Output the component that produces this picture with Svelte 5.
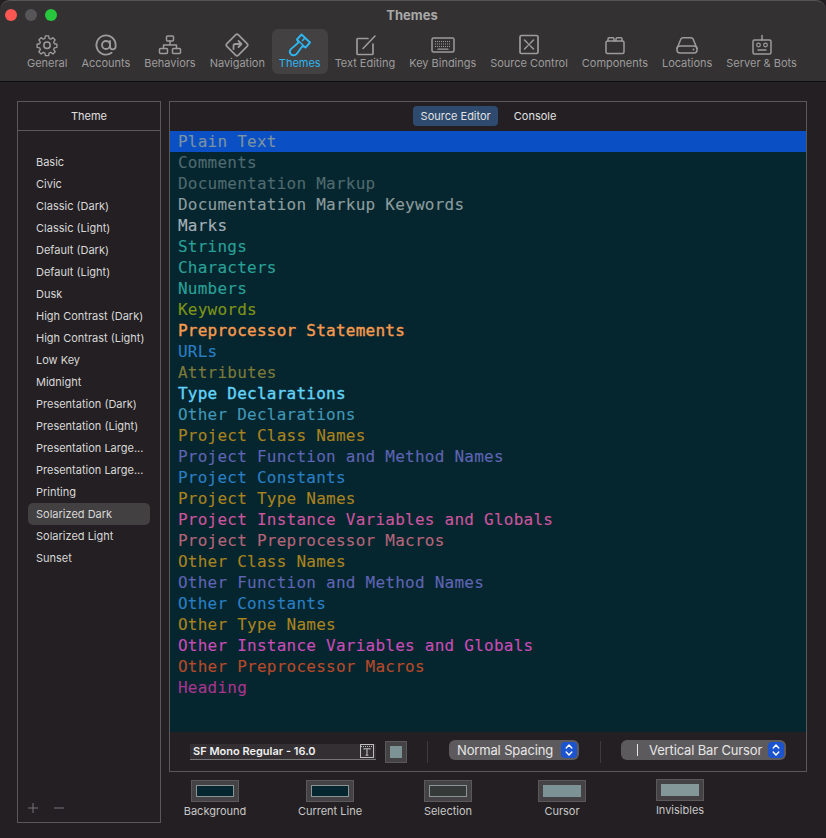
<script>
  const tabs = [
    { label: "General", icon: "gear" },
    { label: "Accounts", icon: "at" },
    { label: "Behaviors", icon: "tree" },
    { label: "Navigation", icon: "nav" },
    { label: "Themes", icon: "brush", active: true },
    { label: "Text Editing", icon: "edit" },
    { label: "Key Bindings", icon: "keys" },
    { label: "Source Control", icon: "source" },
    { label: "Components", icon: "box" },
    { label: "Locations", icon: "disk" },
    { label: "Server & Bots", icon: "bot" },
  ];

  const themes = [
    "Basic", "Civic", "Classic (Dark)", "Classic (Light)", "Default (Dark)", "Default (Light)", "Dusk",
    "High Contrast (Dark)", "High Contrast (Light)", "Low Key", "Midnight", "Presentation (Dark)",
    "Presentation (Light)", "Presentation Large...", "Presentation Large...", "Printing",
    "Solarized Dark", "Solarized Light", "Sunset",
  ];

  const syntax = [
    ["Plain Text", "#7a93a0", false, true],
    ["Comments", "#4f6a70"],
    ["Documentation Markup", "#4f6a70"],
    ["Documentation Markup Keywords", "#8d9c9e"],
    ["Marks", "#a3b0b8"],
    ["Strings", "#2aa198"],
    ["Characters", "#2aa198"],
    ["Numbers", "#2aa198"],
    ["Keywords", "#7f9418"],
    ["Preprocessor Statements", "#f59a4e", true],
    ["URLs", "#2a7fc4"],
    ["Attributes", "#7d7a3a"],
    ["Type Declarations", "#62d2f8", true],
    ["Other Declarations", "#4297b8"],
    ["Project Class Names", "#a98320"],
    ["Project Function and Method Names", "#5f64b4"],
    ["Project Constants", "#2a7fc4"],
    ["Project Type Names", "#a98320"],
    ["Project Instance Variables and Globals", "#cc559f"],
    ["Project Preprocessor Macros", "#b5657a"],
    ["Other Class Names", "#a98320"],
    ["Other Function and Method Names", "#5f64b4"],
    ["Other Constants", "#2a7fc4"],
    ["Other Type Names", "#a98320"],
    ["Other Instance Variables and Globals", "#c94cb8"],
    ["Other Preprocessor Macros", "#b84a2a"],
    ["Heading", "#a8358f"],
  ];

  const wells = [
    { label: "Background", fill: "#05262e", line: "#8b9494" },
    { label: "Current Line", fill: "#05262e", line: "#8b9494" },
    { label: "Selection", fill: "#353a39", line: "#8b9494" },
    { label: "Cursor", fill: "#7c9294", line: "#7c9294" },
    { label: "Invisibles", fill: "#84989a", line: "#84989a", raised: true },
  ];
</script>

<div class="window">
  <header class="titlebar">
    <div class="lights">
      <span class="light red"></span>
      <span class="light grey"></span>
      <span class="light green"></span>
    </div>
    <div class="title">Themes</div>
    <nav class="tabs">
      {#each tabs as tab}
        <div class="tab" class:active={tab.active}>
          <svg viewBox="0 0 24 24" width="24" height="24" fill="none" stroke="currentColor" stroke-width="1.5" stroke-linejoin="round" stroke-linecap="round">
            {#if tab.icon === "gear"}
              <path d="M10.2 2.5h3.6l.5 2.9 1.9.8 2.4-1.7 2.5 2.5-1.7 2.4.8 1.9 2.8.5v3.5l-2.8.5-.8 1.9 1.7 2.4-2.5 2.5-2.4-1.7-1.9.8-.5 2.8h-3.6l-.5-2.8-1.9-.8-2.4 1.7-2.5-2.5 1.7-2.4-.8-1.9-2.8-.5v-3.5l2.8-.5.8-1.9-1.7-2.4 2.5-2.5 2.4 1.7 1.9-.8z" transform="translate(1.2 .6) scale(.9)" />
              <circle cx="12" cy="12.3" r="3.2" />
            {:else if tab.icon === "at"}
              <circle cx="12" cy="12" r="4" stroke-width="1.8" />
              <path d="M16 8v5.5a2.8 2.8 0 0 0 5.6 0V12a9.6 9.6 0 1 0-4 7.8" stroke-width="1.8" />
            {:else if tab.icon === "tree"}
              <rect x="8.5" y="3" width="7" height="5" rx="1" />
              <rect x="1.5" y="15.5" width="8" height="5" rx="1" />
              <rect x="14.5" y="15.5" width="8" height="5" rx="1" />
              <path d="M12 8v4M5.5 15.5V12h13v3.5" />
            {:else if tab.icon === "nav"}
              <path d="M10.6 1.9a2 2 0 0 1 2.8 0l8.7 8.7a2 2 0 0 1 0 2.8l-8.7 8.7a2 2 0 0 1-2.8 0l-8.7-8.7a2 2 0 0 1 0-2.8z" stroke-width="1.7" />
              <path d="M8.5 16v-3a2 2 0 0 1 2-2h6M13.5 8l3 3-3 3" stroke-width="1.8" />
            {:else if tab.icon === "brush"}
              <path d="M13.5 1.5L22 9.5l-4.5 5-3-1.5L9 20.5c-1.5 2-4.5 2.3-6 .8s-1.4-3.8.2-5.4l7.3-6.4L9 6.5z" stroke-width="1.9" />
              <path d="M9 6.5l8.5 8M17 5l-2.5 2.5" stroke-width="1.6" />
            {:else if tab.icon === "edit"}
              <path d="M20 11v9.5a1 1 0 0 1-1 1H5a1 1 0 0 1-1-1V6.5a1 1 0 0 1 1-1h10" stroke-width="1.7" />
              <path d="M10 15.5L22 3" stroke-width="1.6" />
            {:else if tab.icon === "keys"}
              <rect x="1" y="5" width="22" height="14" rx="1.5" />
              <path d="M4 8.5h16M4 11h16M4 13.5h16" stroke-dasharray="1 1" stroke-width="1.2" stroke-linecap="butt" />
              <path d="M7 16.2h10" stroke-width="1.2" />
            {:else if tab.icon === "source"}
              <rect x="3" y="2.5" width="18" height="18" rx="1.5" stroke-width="1.7" />
              <path d="M7.5 7l3 3M16.5 7l-3 3M7.5 16l3-3M16.5 16l-3-3" />
              <circle cx="12" cy="11.5" r="1.3" fill="currentColor" stroke="none" />
            {:else if tab.icon === "box"}
              <path d="M3 9.5a1.5 1.5 0 0 1 1.5-1.5h15a1.5 1.5 0 0 1 1.5 1.5V19a1.5 1.5 0 0 1-1.5 1.5h-15A1.5 1.5 0 0 1 3 19z" />
              <path d="M5 8V6a1.2 1.2 0 0 1 1.2-1.2h3.6A1.2 1.2 0 0 1 11 6v2M13 8V6a1.2 1.2 0 0 1 1.2-1.2h3.6A1.2 1.2 0 0 1 19 6v2" />
            {:else if tab.icon === "disk"}
              <path d="M2 15.5L5.8 6.2A2.5 2.5 0 0 1 8.1 4.8h7.8a2.5 2.5 0 0 1 2.3 1.4L22 15.5" />
              <rect x="2" y="13" width="20" height="7" rx="3" />
              <circle cx="18.5" cy="16.5" r=".9" fill="currentColor" stroke="none" />
            {:else if tab.icon === "bot"}
              <rect x="3" y="7" width="18" height="14" rx="1.5" />
              <path d="M12 7V2.5M8 17h8" />
              <circle cx="8.5" cy="12" r="1.8" stroke-width="1.2" />
              <circle cx="15.5" cy="12" r="1.8" stroke-width="1.2" />
            {/if}
          </svg>
          <span>{tab.label}</span>
        </div>
      {/each}
    </nav>
  </header>

  <main class="content">
    <aside class="sidebar">
      <div class="sidebar-head">Theme</div>
      <ul class="theme-list">
        {#each themes as theme}
          <li class:selected={theme === "Solarized Dark"}>{theme}</li>
        {/each}
      </ul>
      <div class="add-remove">
        <svg viewBox="0 0 10 10" width="10" height="10" stroke="#77757a" stroke-width="1"><path d="M5 0v10M0 5h10" /></svg>
        <svg viewBox="0 0 10 10" width="10" height="10" stroke="#77757a" stroke-width="1"><path d="M0 5h10" /></svg>
      </div>
    </aside>

    <section class="right">
      <div class="panel">
        <div class="segments">
          <span class="segment on">Source Editor</span>
          <span class="segment">Console</span>
        </div>
        <div class="editor">
          {#each syntax as [name, color, bold, current]}
            <div class="line" class:current class:bold style="color: {color}">{name}</div>
          {/each}
        </div>
        <div class="options">
          <div class="font-field">
            <span>SF Mono Regular - 16.0</span>
            <svg viewBox="0 0 14 14" width="14" height="14" fill="none" stroke="#bdbdbd">
              <rect x=".5" y=".5" width="13" height="13" />
              <path d="M1 2.5h12" stroke-dasharray="1 1" />
              <path d="M4 5.5v-.7h6v.7M7 4.8v6.4M5.6 11.2h2.8" stroke-width="1.1" />
            </svg>
          </div>
          <div class="small-well"><span></span></div>
          <span class="divider"></span>
          <div class="popup spacing">
            <span>Normal Spacing</span>
            <span class="stepper">
              <svg viewBox="0 0 10 16" width="10" height="16" fill="none" stroke="#fff" stroke-width="1.4" stroke-linecap="round" stroke-linejoin="round"><path d="M2.2 6L5 3l2.8 3M2.2 10L5 13l2.8-3" /></svg>
            </span>
          </div>
          <span class="divider second"></span>
          <div class="popup cursor">
            <span class="bar"></span>
            <span>Vertical Bar Cursor</span>
            <span class="stepper">
              <svg viewBox="0 0 10 16" width="10" height="16" fill="none" stroke="#fff" stroke-width="1.4" stroke-linecap="round" stroke-linejoin="round"><path d="M2.2 6L5 3l2.8 3M2.2 10L5 13l2.8-3" /></svg>
            </span>
          </div>
        </div>
      </div>

      <div class="wells">
        {#each wells as well}
          <div class="well-item" class:raised={well.raised}>
            <div class="well">
              <span style="background: {well.fill}; border-color: {well.line}"></span>
            </div>
            <label>{well.label}</label>
          </div>
        {/each}
      </div>
    </section>
  </main>
</div>

<style>
  :global(body) {
    margin: 0;
    background: #231f22;
  }

  .window {
    width: 826px;
    height: 838px;
    overflow: hidden;
    font-family: Inter, "Liberation Sans", sans-serif;
    font-size: 11px;
    color: #dcdcdc;
    background: #231f22;
  }

  .titlebar {
    position: relative;
    height: 80px;
    background: #333132;
    border-top: 1px solid #555;
    border-bottom: 1px solid #0c0c0c;
    border-radius: 10px 10px 0 0;
  }

  .lights {
    position: absolute;
    top: 8px;
    left: 5px;
    display: flex;
    gap: 8px;
  }

  .light {
    width: 12px;
    height: 12px;
    border-radius: 50%;
  }

  .red { background: #fc5753; }
  .grey { background: #565557; }
  .green { background: #27c73e; }

  .title {
    padding: 7px 2px 0 0;
    text-align: center;
    font-size: 13px;
    font-weight: 700;
    line-height: 14px;
    color: #a9a8a8;
  }

  .tabs {
    display: flex;
    padding: 7px 0 0 20px;
    letter-spacing: -0.02px;
  }

  .tab {
    display: flex;
    flex-direction: column;
    align-items: center;
    height: 45px;
    padding: 0 7px;
    border-radius: 6px;
    box-sizing: border-box;
    color: #9d9c9c;
    white-space: nowrap;
  }

  .tab svg {
    margin-top: 4px;
    display: block;
  }

  .tab span {
    line-height: 14px;
    margin-top: -1px;
  }

  .tab.active {
    background: #434142;
    color: #2fb5f0;
  }

  .content {
    display: flex;
    gap: 8px;
    padding: 19px 0 0 17px;
  }

  .sidebar {
    width: 142px;
    height: 720px;
    display: flex;
    flex-direction: column;
    border: 1px solid #5b585a;
  }

  .sidebar-head {
    height: 28px;
    line-height: 28px;
    text-align: center;
    border-bottom: 1px solid #5b585a;
    color: #e0e0e0;
  }

  .theme-list {
    list-style: none;
    margin: 0;
    padding: 20px 10px 0;
    flex: 1;
  }

  .theme-list li {
    height: 22px;
    line-height: 22px;
    padding-left: 8px;
    border-radius: 5px;
    color: #d8d8d8;
    white-space: nowrap;
  }

  .theme-list li.selected {
    background: #424041;
  }

  .add-remove {
    display: flex;
    gap: 16px;
    padding: 0 0 9px 10px;
  }

  .panel {
    width: 636px;
    height: 669px;
    display: flex;
    flex-direction: column;
    border: 1px solid #5b585a;
  }

  .segments {
    height: 29px;
    display: flex;
    justify-content: center;
    align-items: center;
    gap: 9px;
    padding-bottom: 1px;
    box-sizing: border-box;
  }

  .segment {
    padding: 0 7px;
    height: 20px;
    line-height: 20px;
    border-radius: 4px;
    color: #e2e2e2;
  }

  .segment.on {
    padding-left: 8px;
    background: #2e4a6e;
  }

  .editor {
    flex: 1;
    background: #05262e;
    font-family: "DejaVu Sans Mono", monospace;
    font-size: 16px;
  }

  .line {
    height: 21px;
    line-height: 21px;
    padding-left: 8px;
    letter-spacing: 0.24px;
    white-space: nowrap;
    -webkit-text-stroke: 0.12px currentColor;
  }

  .line.bold {
    -webkit-text-stroke: 0.4px currentColor;
  }

  .line.current {
    background: #0b4fc4;
  }

  .options {
    height: 39px;
    display: flex;
    align-items: center;
    padding-left: 20px;
    box-sizing: border-box;
  }

  .font-field {
    width: 186px;
    height: 16px;
    display: flex;
    align-items: center;
    justify-content: space-between;
    padding: 0 2px 0 3px;
    box-sizing: border-box;
    background: #332f32;
    border-bottom: 1px solid #777;
    font-weight: 600;
    color: #f0f0f0;
    white-space: nowrap;
  }

  .small-well {
    width: 22px;
    height: 22px;
    margin-left: 9px;
    display: flex;
    align-items: center;
    justify-content: center;
    background: #454245;
    box-sizing: border-box;
    border: 1px solid #5b585a;
  }

  .small-well span {
    width: 12px;
    height: 12px;
    background: #7c9294;
  }

  .divider {
    width: 1px;
    height: 22px;
    background: #3e3b3d;
    margin: 0 21px 0 20px;
  }

  .divider.second {
    margin: 0 20px 0 21px;
  }

  .popup {
    height: 20px;
    margin-bottom: 3px;
    display: flex;
    align-items: center;
    border-radius: 6px;
    background: #5d5a5d;
    font-size: 13px;
    letter-spacing: -0.15px;
    color: #e6e6e6;
    box-sizing: border-box;
    padding: 0 2px 0 8px;
    white-space: nowrap;
  }

  .spacing { width: 130px; }
  .cursor { width: 165px; }

  .bar {
    width: 1px;
    height: 12px;
    background: #e6e6e6;
    margin: 0 11px 0 8px;
  }

  .stepper {
    width: 16px;
    height: 16px;
    margin-left: auto;
    border-radius: 4px;
    background: #1c54d0;
    display: flex;
    align-items: center;
    justify-content: center;
  }

  .wells {
    display: grid;
    grid-template-columns: 116px 114px 122px 106px 130px;
    margin: 8px 0 0 -12px;
  }

  .well-item {
    display: flex;
    flex-direction: column;
    align-items: center;
  }

  .well-item.raised {
    margin-top: -1px;
  }

  .well {
    width: 48px;
    height: 22px;
    display: flex;
    align-items: center;
    justify-content: center;
    box-sizing: border-box;
    background: #454245;
    border: 1px solid #5b585a;
  }

  .well span {
    width: 38px;
    height: 12px;
    border: 1px solid;
    box-sizing: border-box;
  }

  label {
    margin-top: 2px;
    line-height: 14px;
    color: #c8c8c8;
  }
</style>
